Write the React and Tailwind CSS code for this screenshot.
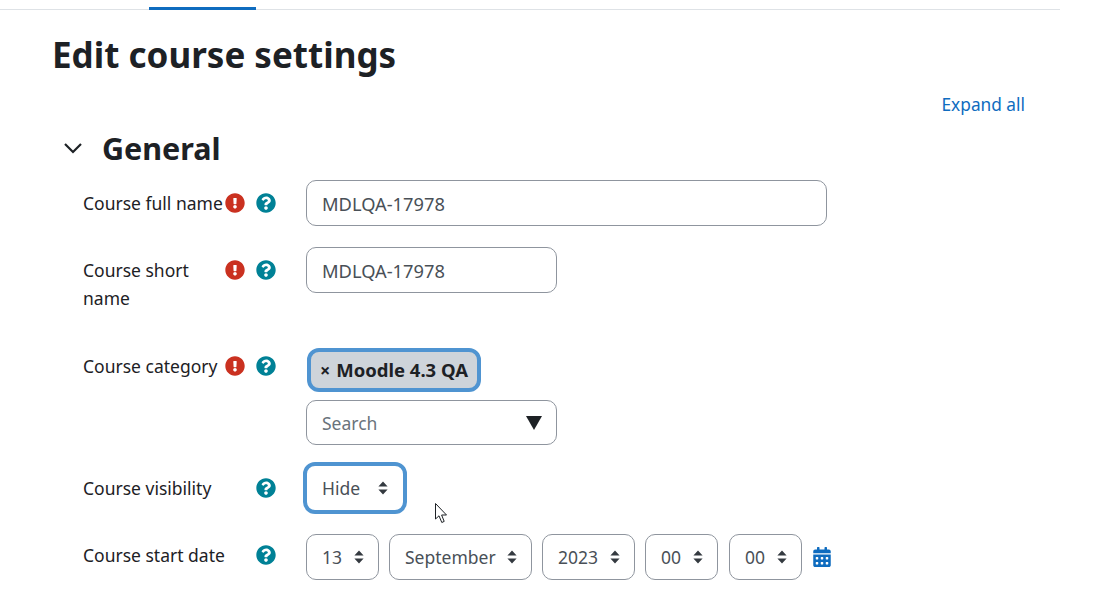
import { FaExclamationCircle, FaQuestionCircle, FaCalendarAlt } from 'react-icons/fa';

function RequiredIcon() {
  return <FaExclamationCircle size={20} className="text-[#ca3120] shrink-0" />;
}

function HelpIcon() {
  return <FaQuestionCircle size={20} className="text-[#008196] shrink-0" />;
}

function Arrows() {
  return (
    <svg width="10" height="14" viewBox="0 0 10 14" className="shrink-0 text-[#343a40]">
      <path d="M5 0.5 L9.6 5.6 H0.4 Z M5 13.5 L0.4 8.4 H9.6 Z" fill="currentColor" />
    </svg>
  );
}

function FieldLabel({ required, children }) {
  return (
    <div className="flex w-[223px] shrink-0 items-start">
      <div className="w-[142px] shrink-0 whitespace-nowrap pt-[9px]">{children}</div>
      <div className="flex h-[46px] w-[20px] shrink-0 items-center">{required && <RequiredIcon />}</div>
      <div className="ml-[11px] flex h-[46px] w-[20px] shrink-0 items-center">
        <HelpIcon />
      </div>
    </div>
  );
}

function Select({ value, className }) {
  return (
    <div className={`flex items-center justify-between bg-white text-[#495057] ${className}`}>
      <span>{value}</span>
      <Arrows />
    </div>
  );
}

const dateField = 'h-[46px] rounded-[10px] border border-[#8f959e] pl-[15px] pr-[14px]';

export default function App() {
  return (
    <div className="h-[597px] w-[1095px] overflow-hidden bg-white font-['Noto_Sans','Open_Sans',sans-serif] text-[17.5px] leading-[28px] text-[#1d2125]">
      <div className="w-[1060px] border-b border-[#dee2e6] pl-[149px] pt-[7px]">
        <div className="mb-[-1px] h-[3px] w-[107px] bg-[#0f6cbf]" />
      </div>

      <h1 className="pl-[52px] pt-[22px] text-[35px] font-bold leading-[46px]">Edit course settings</h1>

      <div className="flex w-[1025px] justify-end pt-[13px]">
        <a className="text-[17.3px] text-[#0f6cbf]">Expand all</a>
      </div>

      <div className="flex items-center pl-[63px] pt-[9px]">
        <svg width="20" height="20" viewBox="0 0 20 20" fill="none" stroke="currentColor" strokeWidth="2.2">
          <path d="M2 6 L10 14 L18 6" />
        </svg>
        <h2 className="ml-[19px] text-[30.5px] font-bold leading-[40px]">General</h2>
      </div>

      <div className="pl-[83px] pt-[12px]">
        <div className="flex h-[67px]">
          <FieldLabel required>Course full name</FieldLabel>
          <input
            readOnly
            value="MDLQA-17978"
            className="h-[46px] w-[521px] rounded-[10px] border border-[#8f959e] px-[15px] text-[18.3px] text-[#495057] outline-none"
          />
        </div>

        <div className="flex h-[96px]">
          <FieldLabel required>
            Course short
            <br />
            name
          </FieldLabel>
          <input
            readOnly
            value="MDLQA-17978"
            className="h-[46px] w-[251px] rounded-[10px] border border-[#8f959e] px-[15px] text-[18.3px] text-[#495057] outline-none"
          />
        </div>

        <div className="flex h-[122px]">
          <FieldLabel required>Course category</FieldLabel>
          <div className="mt-[5px] flex flex-col items-start">
            <div className="ml-px flex h-[44px] w-[174px] items-center justify-center rounded-[12px] border-[4px] border-[#4f94d1] bg-[#ced4da] text-[18.5px] font-bold">
              <span className="mr-[6px] text-[18px]">×</span>Moodle 4.3 QA
            </div>
            <div className="mt-[8px] flex h-[45px] w-[251px] items-center justify-between rounded-[10px] border border-[#8f959e] bg-white pl-[15px] pr-[14px] text-[#6a737b]">
              <span>Search</span>
              <span className="h-0 w-0 border-x-[8px] border-t-[14px] border-x-transparent border-t-[#1d2125]" />
            </div>
          </div>
        </div>

        <div className="flex h-[67px]">
          <FieldLabel>Course visibility</FieldLabel>
          <Select
            value="Hide"
            className="-ml-[3px] -mt-[3px] h-[52px] w-[104px] rounded-[12px] border-[4px] border-[#4f94d1] px-[15px]"
          />
        </div>

        <div className="flex">
          <FieldLabel>Course start date</FieldLabel>
          <div className="mt-[2px] flex items-center">
            <Select value="13" className={`w-[73px] ${dateField}`} />
            <Select value="September" className={`ml-[10px] w-[143px] ${dateField}`} />
            <Select value="2023" className={`ml-[10px] w-[93px] ${dateField}`} />
            <Select value="00" className={`ml-[10px] w-[73px] ${dateField}`} />
            <Select value="00" className={`ml-[11px] w-[73px] ${dateField}`} />
            <FaCalendarAlt size={20} className="ml-[10px] text-[#0f6cbf]" />
          </div>
        </div>
      </div>

      {/* mouse pointer sitting over the page */}
      <svg width="14" height="21" viewBox="0 0 14 21" className="absolute left-[435px] top-[503px]">
        <path d="M0.5 0.5 V16 L4 12.8 L6.8 19.5 L9.2 18.4 L6.6 12 H11.5 Z" fill="white" stroke="#1d2125" strokeWidth="1" />
      </svg>
    </div>
  );
}
